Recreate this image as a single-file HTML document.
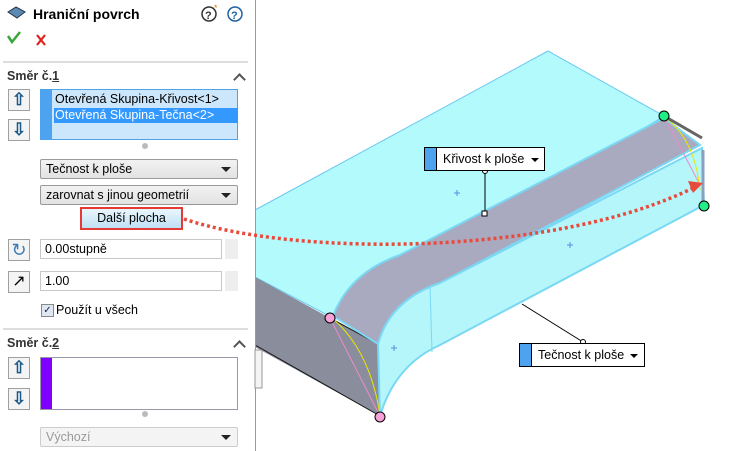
<!DOCTYPE html>
<html><head><meta charset="utf-8"><style>
body{margin:0;width:750px;height:451px;overflow:hidden;background:#fff;font-family:"Liberation Sans",sans-serif;font-size:12px;color:#000;position:relative}
.a{position:absolute}
.btn{position:absolute;width:22px;height:22px;border:1px solid #a0a0a0;background:#f4f4f4;box-sizing:border-box}
.dd{position:absolute;left:40px;width:198px;height:20px;border:1px solid #9a9a9a;border-radius:2px;background:linear-gradient(#f2f2f2,#e2e2e2);box-sizing:border-box;padding:2px 5px;font-size:12.5px}
.dd:after{content:"";position:absolute;right:6px;top:7px;border-left:5px solid transparent;border-right:5px solid transparent;border-top:5px solid #222}
.inp{position:absolute;left:40px;width:182px;height:20px;border:1px solid #c8c8c8;box-sizing:border-box;padding:2px 4px;font-size:12.5px;background:#fff}
.spin{position:absolute;left:225px;width:13px;height:20px;background:#eee}
.sec{position:absolute;left:7px;font-weight:bold;font-size:12.5px;color:#333}
.car{position:absolute;left:235px;width:7px;height:7px;border-left:2px solid #555;border-top:2px solid #555;transform:rotate(45deg)}
</style></head><body>
<svg class="a" style="left:0;top:0" width="750" height="451">
<polygon points="255,210 548,51 664,116 333,318 255,277" fill="#b2fafc" stroke="#6cc8f0" stroke-width="1"/>
<polygon points="255,277 330,318 378,344 380,416 255,347" fill="#8a8d9c"/>
<line x1="255" y1="345" x2="380" y2="416" stroke="#111"/>
<line x1="330" y1="318" x2="378" y2="344" stroke="#222"/>
<path d="M333,316 Q350,272 400,255 L664,118 L700,145 L440,283 Q390,300 378,344 Z" fill="#a9aac0" stroke="#7ad8f4" stroke-width="2"/>
<path d="M378,344 Q390,300 440,283 L702,148 L704,205 L440,345 Q395,365 380,416 Z" fill="#b4f6fa" stroke="#7ad8f4" stroke-width="2"/>
<line x1="430" y1="287" x2="432" y2="352" stroke="#7ad8f4"/>
<line x1="330" y1="318" x2="380" y2="416" stroke="#f08ac8"/>
<path d="M332,318 Q370,350 380,415" fill="none" stroke="#e8e800"/>
<line x1="664" y1="116" x2="700" y2="185" stroke="#f08ac8"/>
<path d="M666,118 Q695,140 700,190" fill="none" stroke="#e8e800"/>
<line x1="664" y1="116" x2="702" y2="138" stroke="#666" stroke-width="3"/>
<line x1="703" y1="150" x2="703" y2="205" stroke="#8aa0c0" stroke-width="3"/>
<circle cx="664" cy="116" r="5" fill="#2e8" stroke="#000"/>
<circle cx="704" cy="206" r="5" fill="#2e8" stroke="#000"/>
<circle cx="330" cy="318" r="5" fill="#f8a0d8" stroke="#000"/>
<circle cx="380" cy="417" r="5" fill="#f8a0d8" stroke="#000"/>
<g stroke="#5a8ce8"><path d="M454,193h6M457,190v6M567,245h6M570,242v6M391,348h6M394,345v6"/></g>
<line x1="485" y1="171" x2="485" y2="213" stroke="#000"/>
<circle cx="485" cy="171" r="2.5" fill="#fff" stroke="#000"/>
<rect x="482" y="211" width="5" height="5" fill="#fff" stroke="#000"/>
<line x1="583" y1="342" x2="522" y2="304" stroke="#000"/>
<circle cx="583" cy="342" r="2.5" fill="#fff" stroke="#000"/>
<rect x="0" y="0" width="255" height="451" fill="#fff"/>
<line x1="255.5" y1="0" x2="255.5" y2="451" stroke="#999"/>
<rect x="255" y="350" width="7" height="38" fill="#f4f4f4" stroke="#999"/>
<path d="M184,219 C300,258 560,255 695,187" fill="none" stroke="#e84a3c" stroke-width="3.5" stroke-dasharray="3,3"/>
<polygon points="703,183 688,181 693,193" fill="#e84a3c"/>
<line x1="3" y1="62" x2="248" y2="62" stroke="#bbb"/>
<line x1="3" y1="329" x2="248" y2="329" stroke="#bbb"/>
<path d="M8,12 L16,7 L25,12 L17,18 Z" fill="#5b8bb5" stroke="#234" stroke-width="1"/>
<path d="M8,36 L12,42 L20,32" fill="none" stroke="#3aa63a" stroke-width="2.5"/>
<path d="M37,35 L45,45 M45,35 L37,45" stroke="#e0201a" stroke-width="2.2"/>
<circle cx="209" cy="14" r="7" fill="#fff" stroke="#333" stroke-width="1.5"/>
<text x="205" y="19" font-size="11" font-weight="bold" fill="#333" font-family="Liberation Sans">?</text>
<text x="214" y="11" font-size="9" fill="#e87a00" font-family="Liberation Sans">*</text>
<circle cx="235" cy="14" r="7" fill="#fff" stroke="#2060a0" stroke-width="1.5"/>
<text x="231" y="19" font-size="11" font-weight="bold" fill="#2060a0" font-family="Liberation Sans">?</text>
<circle cx="145" cy="146" r="3" fill="#bbb"/>
<circle cx="145" cy="414" r="3" fill="#bbb"/>
</svg>
<div class="a" style="left:33px;top:6px;font-weight:bold;font-size:14px">Hraniční povrch</div>
<div class="sec" style="top:69px">Směr č.<u>1</u></div><div class="car" style="top:75px"></div>
<div class="btn" style="left:8px;top:89px;color:#1a5a8a;font-weight:bold;font-size:17px;text-align:center;line-height:20px">⇧</div>
<div class="btn" style="left:8px;top:119px;color:#1a5a8a;font-weight:bold;font-size:17px;text-align:center;line-height:20px">⇩</div>
<div class="a" style="left:40px;top:89px;width:198px;height:51px;background:#cce6fb;border:1px solid #4da3e8;box-sizing:border-box">
<div class="a" style="left:0;top:0;width:11px;height:49px;background:#4da3f0"></div>
<div class="a" style="left:14px;top:2px;font-size:12.5px">Otevřená Skupina-Křivost&lt;1&gt;</div>
<div class="a" style="left:13px;top:18px;width:183px;height:15px;background:#3399ff;color:#fff;font-size:12.5px;padding-left:1px">Otevřená Skupina-Tečna&lt;2&gt;</div></div>
<div class="dd" style="top:159px">Tečnost k ploše</div>
<div class="dd" style="top:185px">zarovnat s jinou geometrií</div>
<div class="a" style="left:80px;top:207px;width:103px;height:23px;border:2px solid #e53935;box-sizing:border-box;background:linear-gradient(#eaf6fd,#bfe0f5);text-align:center;line-height:19px;font-size:12.5px">Další plocha</div>
<div class="btn" style="left:8px;top:239px;color:#3a7ab8;font-size:18px;text-align:center;line-height:20px">↻</div>
<div class="inp" style="top:239px">0.00stupně</div><div class="spin" style="top:239px"></div>
<div class="btn" style="left:8px;top:271px;font-size:16px;text-align:center;line-height:20px">↗</div>
<div class="inp" style="top:271px">1.00</div><div class="spin" style="top:271px"></div>
<div class="a" style="left:41px;top:304px;width:11px;height:11px;border:1px solid #888;background:#dde8f4;font-size:10px;line-height:11px;text-align:center;color:#224">✓</div>
<div class="a" style="left:56px;top:303px;font-size:12.5px">Použít u všech</div>
<div class="sec" style="top:336px">Směr č.<u>2</u></div><div class="car" style="top:342px"></div>
<div class="btn" style="left:8px;top:357px;color:#1a5a8a;font-weight:bold;font-size:17px;text-align:center;line-height:20px">⇧</div>
<div class="btn" style="left:8px;top:388px;color:#1a5a8a;font-weight:bold;font-size:17px;text-align:center;line-height:20px">⇩</div>
<div class="a" style="left:40px;top:357px;width:198px;height:53px;border:1px solid #99a;box-sizing:border-box;background:#fff"><div class="a" style="left:0;top:0;width:11px;height:51px;background:#8000ff"></div></div>
<div class="dd" style="top:427px;color:#999;border-color:#ccc;background:#f4f4f4">Výchozí</div>
<div class="a" style="left:424px;top:147px;width:121px;height:24px;border:1px solid #000;box-sizing:border-box;background:#fff">
<div class="a" style="left:0;top:0;width:11px;height:22px;background:#4da3f0;border-right:1px solid #000"></div>
<div class="a" style="left:18px;top:4px;font-size:12.5px">Křivost k ploše</div>
<div class="a" style="left:106px;top:10px;border-left:4px solid transparent;border-right:4px solid transparent;border-top:4px solid #000"></div></div>
<div class="a" style="left:519px;top:343px;width:126px;height:24px;border:1px solid #000;box-sizing:border-box;background:#fff">
<div class="a" style="left:0;top:0;width:11px;height:22px;background:#4da3f0;border-right:1px solid #000"></div>
<div class="a" style="left:18px;top:4px;font-size:12.5px">Tečnost k ploše</div>
<div class="a" style="left:110px;top:10px;border-left:4px solid transparent;border-right:4px solid transparent;border-top:4px solid #000"></div></div>
</body></html>
